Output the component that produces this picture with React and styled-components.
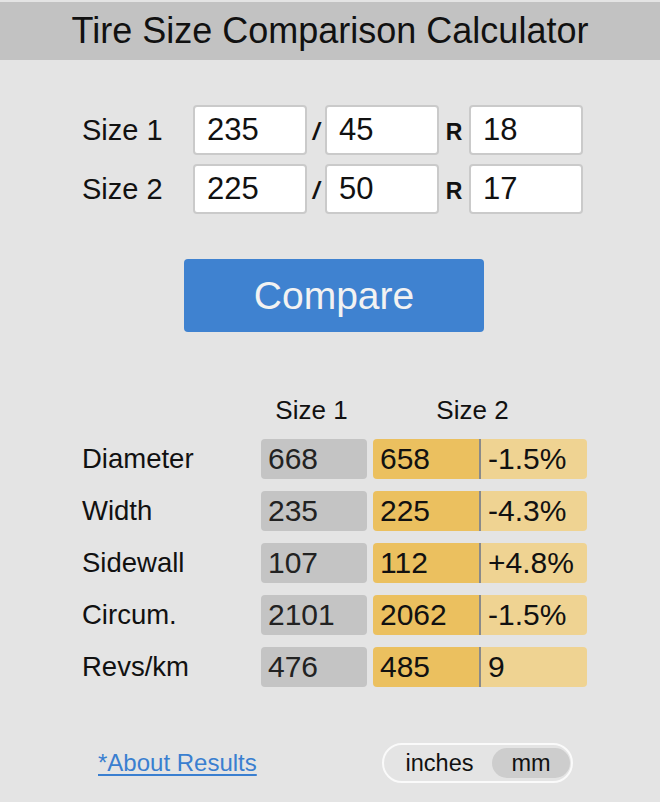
import React from 'react'
import styled, { createGlobalStyle } from 'styled-components'

const GlobalStyle = createGlobalStyle`
  html, body {
    margin: 0;
    padding: 0;
    background: #e4e4e4;
  }
  body {
    font-family: "Liberation Sans", Arial, Helvetica, sans-serif;
    color: #111;
  }
`

const Page = styled.div`
  width: 660px;
  min-height: 802px;
  padding-top: 2px;
  box-sizing: border-box;
  background: #e4e4e4;
`

const Header = styled.h1`
  margin: 0;
  height: 58px;
  background: #c2c2c2;
  display: flex;
  align-items: center;
  justify-content: center;
  font-size: 36px;
  font-weight: normal;
  color: #111;
`

const Form = styled.div`
  display: flex;
  flex-direction: column;
  gap: 9px;
  padding: 45px 0 0 82px;
`

const SizeRow = styled.div`
  display: grid;
  grid-template-columns: 111px 114px 18px 114px 30px 114px;
  align-items: center;
  height: 50px;
`

const SizeLabel = styled.div`
  font-size: 29px;
`

const Input = styled.input`
  box-sizing: border-box;
  width: 114px;
  height: 50px;
  border: 2px solid #cacaca;
  border-radius: 4px;
  background: #fff;
  padding: 0 0 0 12px;
  font-family: inherit;
  font-size: 31px;
  color: #111;
  outline: none;
`

const Sep = styled.span`
  text-align: center;
  font-weight: bold;
  font-size: ${p => p.$size || 23}px;
  font-style: ${p => (p.$slant ? 'italic' : 'normal')};
  padding-top: 4px;
`

const ButtonWrap = styled.div`
  display: flex;
  justify-content: center;
  padding: 45px 0 0 8px;
`

const CompareButton = styled.button`
  width: 300px;
  height: 73px;
  border: none;
  border-radius: 4px;
  background: #3f82d0;
  color: #f2f2f2;
  font-family: inherit;
  font-size: 39px;
  cursor: pointer;
`

const Table = styled.div`
  display: grid;
  grid-template-columns: 173px 106px 214px;
  column-gap: 6px;
  row-gap: 12px;
  padding: 59px 0 0 82px;
  align-items: center;
`

const HeadCell = styled.div`
  font-size: 26px;
  height: 38px;
  line-height: 38px;
  text-align: center;
  padding-right: ${p => p.$shift || 0}px;
  margin-bottom: -2px;
`

const RowLabel = styled.div`
  font-size: 27.5px;
`

const Cell = styled.div`
  height: 40px;
  line-height: 40px;
  border-radius: 4px;
  background: #c4c4c4;
  color: #222;
  font-size: 30px;
  padding-left: 7px;
  box-sizing: border-box;
`

const Pair = styled.div`
  display: flex;
  height: 40px;
  border-radius: 4px;
  overflow: hidden;
  font-size: 30px;
  line-height: 40px;
`

const PairPart = styled.div`
  flex: 1;
  padding-left: 7px;
  background: ${p => (p.$light ? '#efd392' : '#ebc05f')};
  border-left: ${p => (p.$light ? '2px solid #8a8a8a' : 'none')};
  color: #111;
`

const Footer = styled.div`
  display: flex;
  align-items: center;
  padding: 56px 87px 0 98px;
`

const AboutLink = styled.a`
  font-size: 24px;
  color: #3a7fd0;
  text-decoration: underline;
  text-underline-offset: 3px;
  text-decoration-thickness: 2px;
`

const Toggle = styled.div`
  margin-left: auto;
  display: flex;
  align-items: center;
  box-sizing: border-box;
  width: 191px;
  height: 40px;
  border: 2px solid #fafafa;
  border-radius: 20px;
  padding: 3px 1px 3px 3px;
`

const ToggleOption = styled.div`
  flex: ${p => (p.$active ? '0 0 78px' : '1')};
  height: 30px;
  line-height: 30px;
  border-radius: 15px;
  text-align: center;
  font-size: 23.5px;
  color: #111;
  background: ${p => (p.$active ? '#cdcdcd' : 'transparent')};
`

const sizes = [
  { label: 'Size 1', w: '235', a: '45', r: '18' },
  { label: 'Size 2', w: '225', a: '50', r: '17' },
]

const results = [
  { name: 'Diameter', a: '668', b: '658', d: '-1.5%' },
  { name: 'Width', a: '235', b: '225', d: '-4.3%' },
  { name: 'Sidewall', a: '107', b: '112', d: '+4.8%' },
  { name: 'Circum.', a: '2101', b: '2062', d: '-1.5%' },
  { name: 'Revs/km', a: '476', b: '485', d: '9' },
]

const App = () => {
  return (
    <Page>
      <GlobalStyle />
      <Header>Tire Size Comparison Calculator</Header>
      <Form>
        {sizes.map(s => (
          <SizeRow key={s.label}>
            <SizeLabel>{s.label}</SizeLabel>
            <Input defaultValue={s.w} />
            <Sep $slant $size={24}>/</Sep>
            <Input defaultValue={s.a} />
            <Sep>R</Sep>
            <Input defaultValue={s.r} />
          </SizeRow>
        ))}
      </Form>
      <ButtonWrap>
        <CompareButton>Compare</CompareButton>
      </ButtonWrap>
      <Table>
        <div />
        <HeadCell $shift={5}>Size 1</HeadCell>
        <HeadCell $shift={15}>Size 2</HeadCell>
        {results.map(r => (
          <React.Fragment key={r.name}>
            <RowLabel>{r.name}</RowLabel>
            <Cell>{r.a}</Cell>
            <Pair>
              <PairPart>{r.b}</PairPart>
              <PairPart $light>{r.d}</PairPart>
            </Pair>
          </React.Fragment>
        ))}
      </Table>
      <Footer>
        <AboutLink href="#">*About Results</AboutLink>
        <Toggle>
          <ToggleOption>inches</ToggleOption>
          <ToggleOption $active>mm</ToggleOption>
        </Toggle>
      </Footer>
    </Page>
  )
}

export default App
